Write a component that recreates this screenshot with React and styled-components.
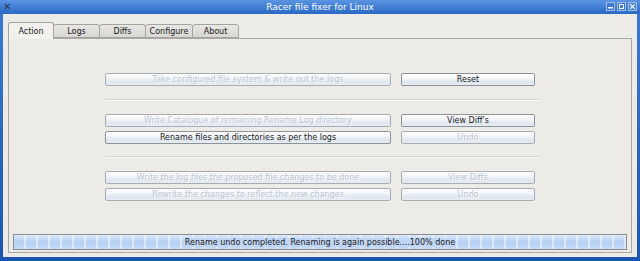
import React from "react";
import styled, { createGlobalStyle } from "styled-components";

const Global = createGlobalStyle`
  html, body { margin: 0; padding: 0; background: #1f5fb8; }
  body { font-family: "DejaVu Sans", "Liberation Sans", sans-serif; }
`;

const Window = styled.div`
  width: 640px;
  height: 261px;
  box-sizing: border-box;
  display: flex;
  flex-direction: column;
  background: linear-gradient(#3a7ad6, #1a56b0);
  padding: 0 3px 4px 3px;
  overflow: hidden;
`;

const TitleBar = styled.div`
  height: 14px;
  display: flex;
  align-items: center;
  position: relative;
  justify-content: center;
  color: #ffffff;
  font-size: 9px;
  background: linear-gradient(#5a94e2, #2a68c6);
  margin: 0 -3px;
  padding: 0 3px;
`;

const TitleIcon = styled.div`
  position: absolute;
  left: 3px;
  top: 2px;
  width: 9px;
  height: 9px;
  color: #2a3a55;
  font-size: 10px;
  line-height: 9px;
`;

const TitleButtons = styled.div`
  position: absolute;
  right: 3px;
  top: 2px;
  display: flex;
  gap: 2px;
`;

const TBtn = styled.div`
  width: 9px;
  height: 9px;
  border: 1px solid #9dbbe8;
  box-sizing: border-box;
  background: ${(p) => (p.$close ? "#4a84d6" : "#3f7ad0")};
  display: flex;
  align-items: center;
  justify-content: center;
`;

const Client = styled.div`
  flex: 1;
  background: #ecebe8;
  padding: 8px 5px 4px 5px;
  display: flex;
  flex-direction: column;
`;

const Tabs = styled.div`
  display: flex;
  align-items: flex-end;
  height: 16px;
  position: relative;
  z-index: 1;
`;

const Tab = styled.div`
  width: ${(p) => p.$w}px;
  height: ${(p) => (p.$active ? 17 : 14)}px;
  box-sizing: border-box;
  border: 1px solid #a4a4a0;
  border-bottom: ${(p) => (p.$active ? "none" : "1px solid #a4a4a0")};
  border-radius: 3px 3px 0 0;
  background: ${(p) => (p.$active ? "#f2f1ee" : "linear-gradient(#e8e7e4, #d8d7d3)")};
  font-size: 8px;
  color: #1a1a1a;
  display: flex;
  align-items: center;
  justify-content: center;
  margin-left: ${(p) => (p.$active ? 0 : -1)}px;
  margin-bottom: ${(p) => (p.$active ? -1 : 0)}px;
`;

const Panel = styled.div`
  flex: 1;
  border: 1px solid #a8a8a4;
  background: #ecebe8;
  display: flex;
  flex-direction: column;
  padding: 34px 4px 2px 4px;
  box-sizing: border-box;
`;

const Row = styled.div`
  display: flex;
  justify-content: center;
  gap: 10px;
  margin-top: ${(p) => p.$mt || 0}px;
`;

const Button = styled.div`
  width: ${(p) => p.$w}px;
  height: 13px;
  box-sizing: border-box;
  border: 1px solid ${(p) => (p.$disabled ? "#a9adb2" : "#8e9297")};
  border-radius: 2px;
  background: linear-gradient(#ffffff 0%, #f3f6f9 40%, #dde5ee 75%, #e8eef4 100%);
  font-size: 8px;
  color: ${(p) => (p.$disabled ? "#b8c4d0" : "#1a1a1a")};
  display: flex;
  align-items: center;
  justify-content: center;
  white-space: nowrap;
  overflow: hidden;
  text-shadow: ${(p) => (p.$disabled ? "1px 1px 0 #ffffff" : "none")};
`;

const Separator = styled.div`
  height: 1px;
  margin: ${(p) => p.$m};
  background: #d6d5d1;
  border-bottom: 1px solid #f8f8f6;
`;

const Progress = styled.div`
  margin-top: auto;
  height: 16px;
  box-sizing: border-box;
  border: 1px solid #8a8e94;
  position: relative;
  background: repeating-linear-gradient(
      90deg,
      rgba(255, 255, 255, 0) 0px,
      rgba(255, 255, 255, 0) 10px,
      rgba(255, 255, 255, 0.45) 10px,
      rgba(255, 255, 255, 0.45) 12px
    ),
    linear-gradient(#dce9fb, #b4cff3 50%, #c7dbf7);
  display: flex;
  align-items: center;
  justify-content: center;
  font-size: 8px;
  color: #1a1a1a;
`;

const Label = styled.span`
  background: #c0d6f5;
  padding: 0 1px;
`;

const tabs = [
  { name: "Action", w: 46, active: true },
  { name: "Logs", w: 47 },
  { name: "Diffs", w: 47 },
  { name: "Configure", w: 48 },
  { name: "About", w: 47 },
];

export default function App() {
  return (
    <>
      <Global />
      <Window>
        <TitleBar>
          <TitleIcon>✕</TitleIcon>
          Racer file fixer for Linux
          <TitleButtons>
            <TBtn>
              <svg width="5" height="5"><rect x="0" y="3" width="5" height="1.5" fill="#fff" /></svg>
            </TBtn>
            <TBtn>
              <svg width="5" height="5"><rect x="0.5" y="0.5" width="4" height="4" fill="none" stroke="#fff" /></svg>
            </TBtn>
            <TBtn $close>
              <svg width="5" height="5"><path d="M0 0L5 5M5 0L0 5" stroke="#fff" strokeWidth="1.2" /></svg>
            </TBtn>
          </TitleButtons>
        </TitleBar>
        <Client>
          <Tabs>
            {tabs.map((t) => (
              <Tab key={t.name} $w={t.w} $active={t.active}>
                {t.name}
              </Tab>
            ))}
          </Tabs>
          <Panel>
            <Row>
              <Button $w={286} $disabled>Take configured file system &amp; write out the logs</Button>
              <Button $w={134}>Reset</Button>
            </Row>
            <Separator $m="13px 87px 13px 92px" />
            <Row>
              <Button $w={286} $disabled>Write Catalogue of remaining Rename Log directory</Button>
              <Button $w={134}>View Diff's</Button>
            </Row>
            <Row $mt={4}>
              <Button $w={286}>Rename files and directories as per the logs</Button>
              <Button $w={134} $disabled>Undo</Button>
            </Row>
            <Separator $m="12px 87px 13px 92px" />
            <Row>
              <Button $w={286} $disabled>Write the log files the proposed file changes to be done</Button>
              <Button $w={134} $disabled>View Diffs</Button>
            </Row>
            <Row $mt={4}>
              <Button $w={286} $disabled>Rewrite the changes to reflect the new changes</Button>
              <Button $w={134} $disabled>Undo</Button>
            </Row>
            <Progress>
              <Label>Rename undo completed. Renaming is again possible....100% done</Label>
            </Progress>
          </Panel>
        </Client>
      </Window>
    </>
  );
}
